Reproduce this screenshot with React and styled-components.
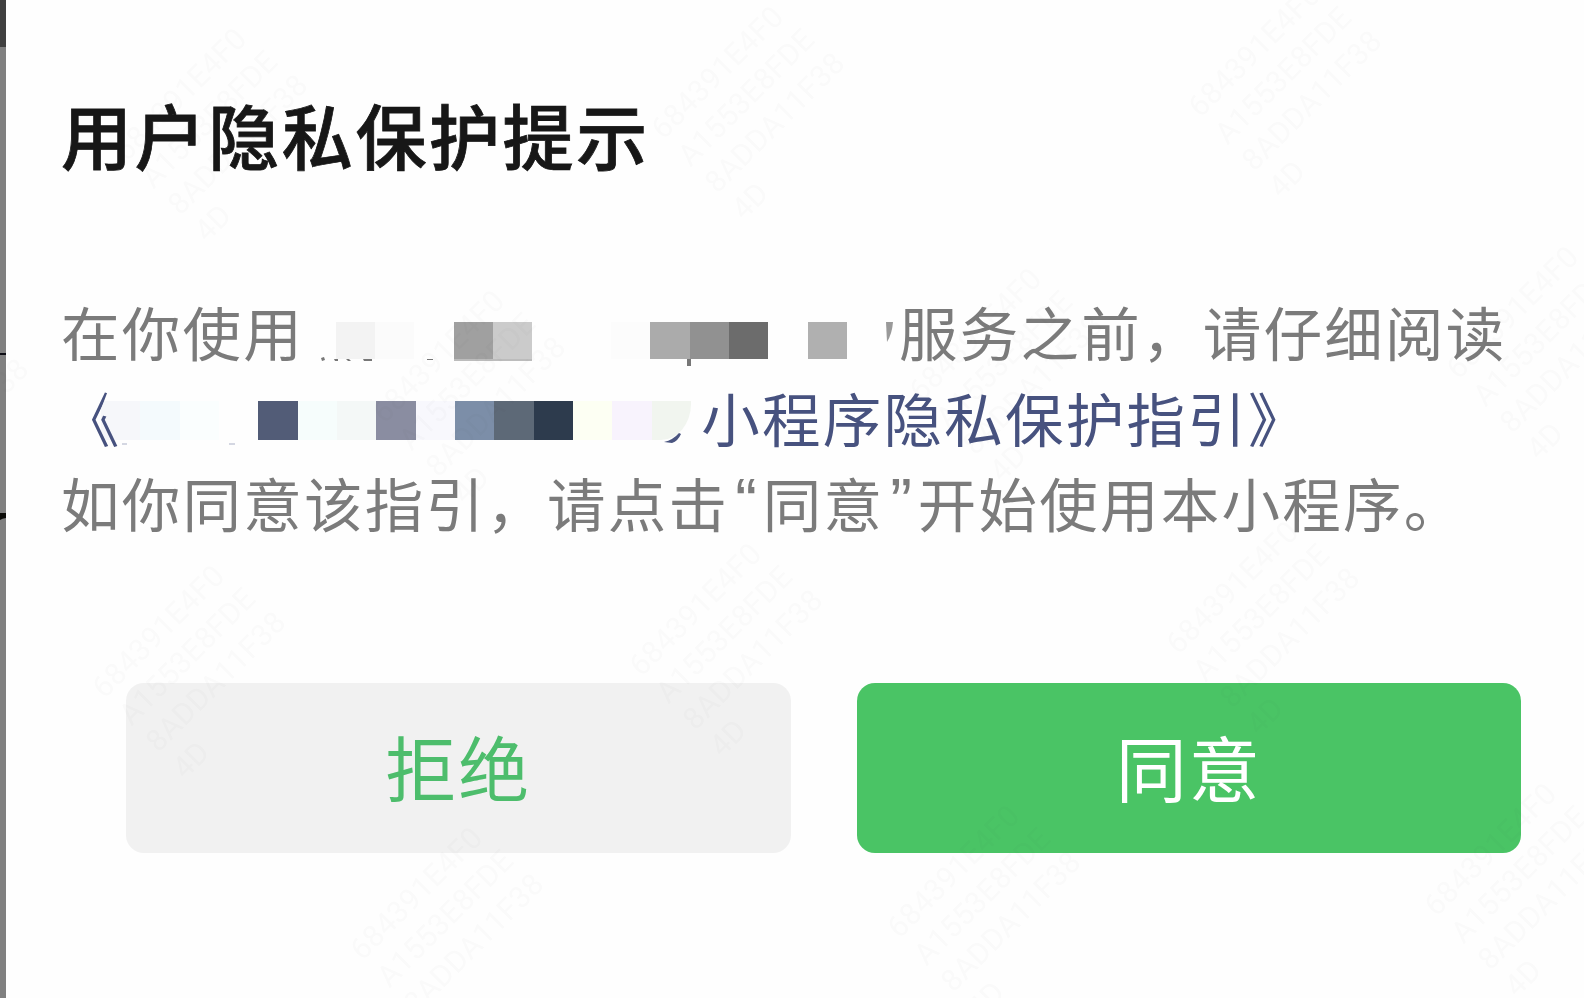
import React from "react";
import styled, { createGlobalStyle } from "styled-components";

const nameCells = [
    "#f3f3f3", "#fbfbfb", "#fefefe", "#a0a0a0", "#cbcbcb", "#fefefe", "#fefefe",
    "#fcfcfc", "#ababab", "#919191", "#6c6c6c", "#fefefe", "#b0b0b0",
];

const linkCells = [
    "#f6f7fa", "#f4fafd", "#fafefe", "#fefefe", "#525c77", "#f6fdfc", "#f4f8f7", "#8a8da1",
    "#f8f8fd", "#7c8ea8", "#5d6977", "#2d3b4d", "#fdfff3", "#f8f3fd", "#f1f5ef",
];

const watermarks = [
    [215, 222], [752, 200], [1289, 178],
    [-64, 506], [473, 484], [1010, 462], [1547, 440],
    [193, 759], [730, 737], [1267, 715],
    [451, 1021], [988, 999], [1525, 977],
];

const App = () => {
    return (
        <Page>
            <GlobalStyle />
            <Backdrop>
                <Band $h={46.5} $color="#404040" />
                <Band $h={306.5} $color="#808080" />
                <Band $h={2} $color="#0d0d14" />
                <Band $h={158} $color="#808080" />
                <svg width="6" height="8" viewBox="0 0 6 8">
                    <rect width="6" height="8" fill="#0b0b08" />
                    <path d="M0 8V7Q2 5.5 6 5V8Z" fill="#808080" />
                </svg>
                <Rest />
            </Backdrop>

            <Dialog>
                <Title>用户隐私保护提示</Title>

                <Content>
                    <Line>
                        <span>在你使用</span>
                        <Hidden $left={31.5} $top={10}>
                            {nameCells.map((color, index) => (
                                <Cell key={index} $color={color} $h={37} />
                            ))}
                            <NameRemains viewBox="0 0 570 50">
                                <path d="M-15 36l3 -1 1 3 -3 1zM-2 37h4v2h-3zM10 37h3l2 2h-3zM27 37h9v2h-8zM91 37h6v1h-6z" fill="#777" />
                                <path d="M118 37h78v2h-78z" fill="#bcbcbc" />
                                <path d="M351 37h4v7h-4z" fill="#777" />
                                <path d="M550 0h7q-1 12 -6 20z" fill="#999" />
                            </NameRemains>
                        </Hidden>
                        <Tail $left={52}>服务之前，请仔细阅读</Tail>
                    </Line>
                    <Line $link>
                        <Bracket>《</Bracket>
                        <Hidden $left={-20} $top={4} $round>
                            {linkCells.map((color, index) => (
                                <Cell key={index} $color={color} $h={39.5} />
                            ))}
                            <LinkRemains viewBox="0 0 600 50">
                                <path d="M563 41q9 -2 15 -9l2 1q-3 7 -9 9z" fill="#4a5580" />
                                <path d="M21 43h5M128 43h6" stroke="#aab0c6" strokeWidth="1" />
                            </LinkRemains>
                        </Hidden>
                        <Tail $left={10}>小程序隐私保护指引》</Tail>
                    </Line>
                    <Line>
                        如你同意该指引，请点击<Quote>“</Quote>同意<Quote>”</Quote>开始使用本小程序。
                    </Line>
                </Content>

                <Actions>
                    <Button>拒绝</Button>
                    <Button $primary>同意</Button>
                </Actions>
            </Dialog>

            {watermarks.map(([x, y]) => (
                <Watermark key={`${x}-${y}`} $x={x} $y={y}>
                    684391E4F0<br />A1553E8FDE<br />8ADDA11F38<br />4D
                </Watermark>
            ))}
        </Page>
    );
};

export default App;

const GlobalStyle = createGlobalStyle`
  body {
    margin: 0;
    background: #fefefe;
  }
  * {
    box-sizing: border-box;
  }
`;

const Page = styled.main`
  position: relative;
  display: flex;
  width: 1584px;
  height: 998px;
  overflow: hidden;
  background: #fefefe;
  font-family: "Noto Sans CJK SC", sans-serif;
`;

const Backdrop = styled.div`
  display: flex;
  flex-direction: column;
  width: 6px;
  flex: none;
`;

const Band = styled.div`
  height: ${(p) => p.$h}px;
  flex: none;
  background: ${(p) => p.$color};
`;

const Rest = styled.div`
  flex: 1;
  background: #808080;
`;

const Dialog = styled.section`
  flex: 1;
  padding: 83px 0 0 55px;
`;

const Title = styled.h1`
  margin: 0;
  height: 100px;
  font-size: 71px;
  line-height: 100px;
  font-weight: 500;
  letter-spacing: 2.6px;
  color: #171717;
  -webkit-text-stroke: 0.8px #171717;
`;

const Content = styled.div`
  margin-top: 105px;
  font-size: 58.5px;
  letter-spacing: 2.25px;
`;

const Line = styled.div`
  display: flex;
  align-items: center;
  height: 85.5px;
  line-height: 85.5px;
  white-space: nowrap;
  color: ${(p) => (p.$link ? "#47527f" : "#7b7b7b")};
`;

const Hidden = styled.div`
  position: relative;
  display: flex;
  flex: none;
  margin-left: ${(p) => p.$left}px;
  margin-top: ${(p) => p.$top * 2}px;
  ${(p) => p.$round && "border-radius: 12px 0 30px 0 / 30px 0 36px 0;"}
`;

const Cell = styled.i`
  width: 39.35px;
  height: ${(p) => p.$h}px;
  background: ${(p) => p.$color};

  &:last-of-type {
    border-bottom-right-radius: inherit;
  }
`;

const NameRemains = styled.svg`
  position: absolute;
  left: 0;
  top: 0;
  width: 570px;
  height: 50px;
  overflow: visible;
`;

const LinkRemains = styled(NameRemains)`
  width: 600px;
`;

const Tail = styled.span`
  margin-left: ${(p) => p.$left}px;
`;

/* only the lower half of the inner chevron stays visible */
const Bracket = styled.span`
  position: relative;
  z-index: 1;
  width: 60px;
  clip-path: polygon(0 0, 53px 0, 50px 9px, 38px 41px, 60px 47px, 60px 100%, 0 100%);
`;

const Quote = styled.span`
  display: inline-block;
  width: 33.5px;
  text-align: center;
  letter-spacing: 0;
  font-size: 65px;
  line-height: 1;
  font-family: "Liberation Sans", sans-serif;
`;

const Actions = styled.div`
  display: flex;
  gap: 66px;
  margin: 138px 0 0 65px;
`;

const Button = styled.button`
  width: 664.5px;
  height: 170px;
  padding: 0 0 5px 0;
  border: none;
  border-radius: 18px;
  font-family: inherit;
  font-size: 71px;
  line-height: 100px;
  letter-spacing: 2px;
  color: ${(p) => (p.$primary ? "#fff" : "#4dbd6c")};
  background: ${(p) => (p.$primary ? "#4ac465" : "#f1f1f1")};
`;

const Watermark = styled.div`
  position: absolute;
  left: ${(p) => p.$x - 109}px;
  top: ${(p) => p.$y - 80}px;
  transform: rotate(-45deg);
  transform-origin: 0 0;
  font: 30px/38px Roboto, sans-serif;
  letter-spacing: 0.4px;
  white-space: nowrap;
  color: #fbfbfb;
  mix-blend-mode: multiply;
  pointer-events: none;
`;
